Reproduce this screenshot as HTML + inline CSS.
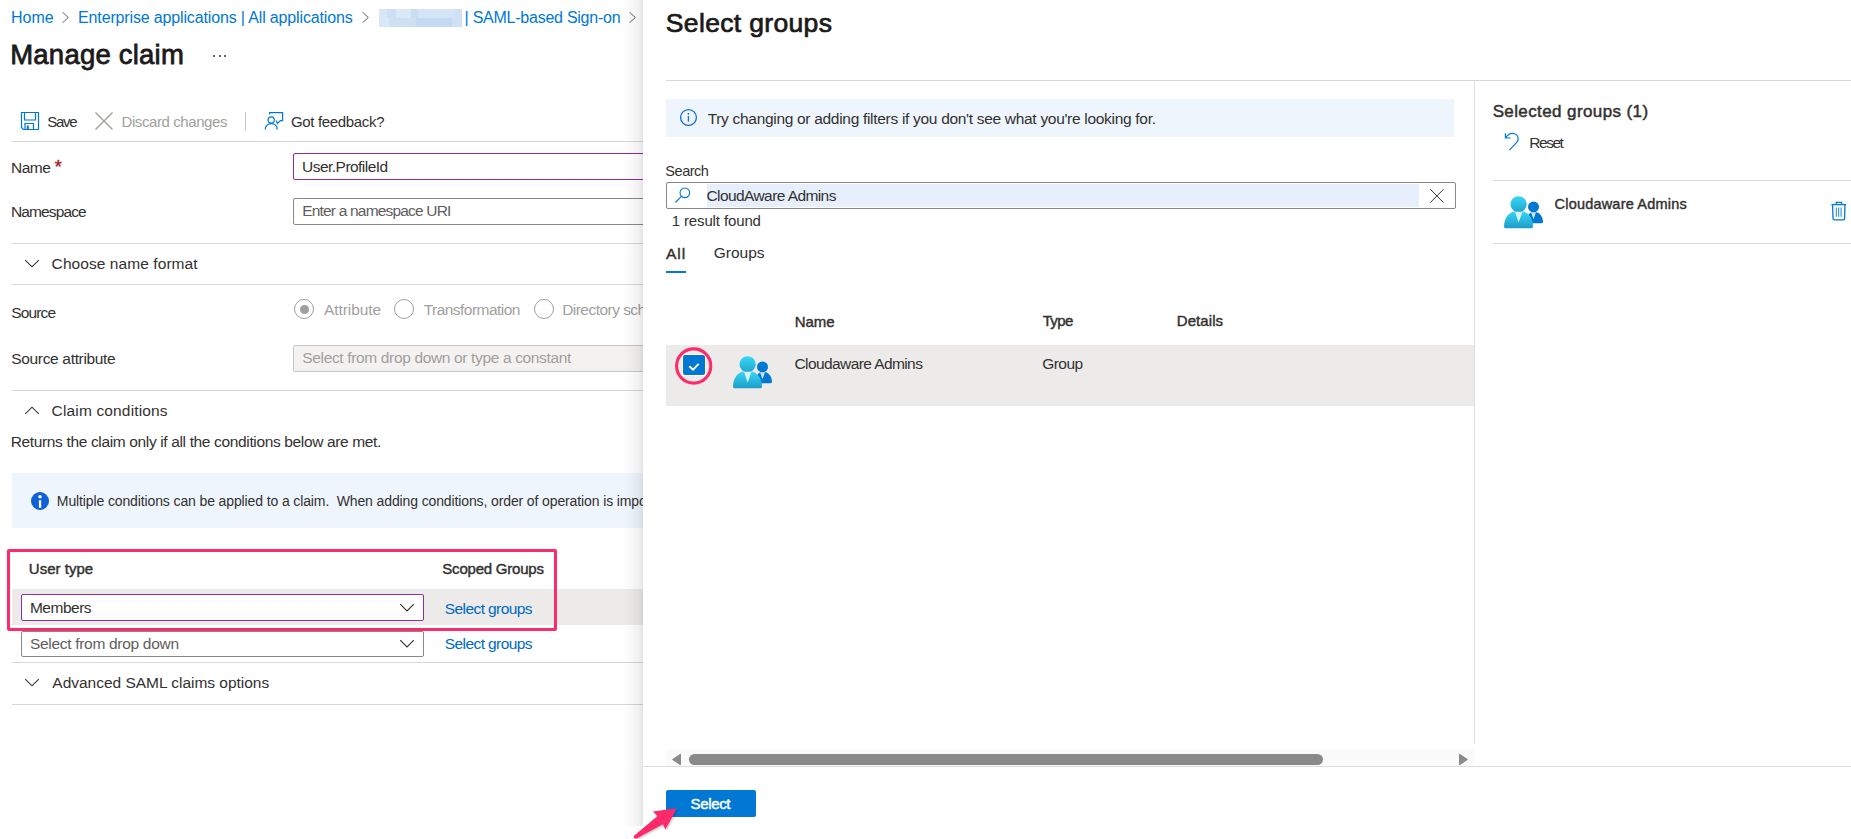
<!DOCTYPE html>
<html><head><meta charset="utf-8">
<style>
html,body{margin:0;padding:0;}
body{width:1851px;height:839px;position:relative;overflow:hidden;background:#fff;font-family:"Liberation Sans",sans-serif;}
.t{position:absolute;white-space:nowrap;line-height:1;z-index:5;}
.a{position:absolute;}
#left{position:absolute;left:0;top:0;width:643px;height:839px;overflow:hidden;background:#fff;}
.hl{position:absolute;height:1px;background:#d6d6d6;}
</style></head><body>
<div id="left">
<div class="t" style="left:10.99px;top:10.15px;font-size:16px;letter-spacing:0.015px;color:#0078d4;">Home</div>
<div class="t" style="left:78.09px;top:10.15px;font-size:16px;letter-spacing:-0.150px;color:#0078d4;">Enterprise applications | All applications</div>
<div class="t" style="left:464.57px;top:10.15px;font-size:16px;letter-spacing:-0.248px;color:#0078d4;">| SAML-based Sign-on</div>
<div class="t" style="left:10.24px;top:40.72px;font-size:27.5px;letter-spacing:0.216px;color:#1b1a19;-webkit-text-stroke:0.77px #1b1a19;">Manage claim</div>
<div class="t" style="left:47.32px;top:114.30px;font-size:15px;letter-spacing:-1.281px;color:#323130;">Save</div>
<div class="t" style="left:121.47px;top:114.30px;font-size:15px;letter-spacing:-0.411px;color:#a19f9d;">Discard changes</div>
<div class="t" style="left:290.95px;top:114.30px;font-size:15px;letter-spacing:-0.330px;color:#323130;">Got feedback?</div>
<div class="t" style="left:11.03px;top:160.38px;font-size:15.5px;letter-spacing:-0.529px;color:#323130;">Name</div>
<div class="t" style="left:54.71px;top:158.36px;font-size:18px;letter-spacing:0.000px;color:#a4262c;-webkit-text-stroke:0.50px #a4262c;">*</div>
<div class="t" style="left:302.10px;top:158.88px;font-size:15.5px;letter-spacing:-0.538px;color:#323130;">User.ProfileId</div>
<div class="t" style="left:11.03px;top:203.58px;font-size:15.5px;letter-spacing:-0.881px;color:#323130;">Namespace</div>
<div class="t" style="left:302.23px;top:202.88px;font-size:15.5px;letter-spacing:-0.811px;color:#605e5c;">Enter a namespace URI</div>
<div class="t" style="left:51.61px;top:256.28px;font-size:15.5px;letter-spacing:0.074px;color:#323130;">Choose name format</div>
<div class="t" style="left:11.30px;top:304.88px;font-size:15.5px;letter-spacing:-0.864px;color:#323130;">Source</div>
<div class="t" style="left:323.97px;top:301.88px;font-size:15.5px;letter-spacing:-0.063px;color:#a19f9d;">Attribute</div>
<div class="t" style="left:423.65px;top:301.88px;font-size:15.5px;letter-spacing:-0.529px;color:#a19f9d;">Transformation</div>
<div class="t" style="left:562.13px;top:301.88px;font-size:15.5px;letter-spacing:-0.529px;color:#a19f9d;">Directory schema extension</div>
<div class="t" style="left:11.30px;top:350.88px;font-size:15.5px;letter-spacing:-0.335px;color:#323130;">Source attribute</div>
<div class="t" style="left:302.30px;top:349.88px;font-size:15.5px;letter-spacing:-0.348px;color:#a19f9d;">Select from drop down or type a constant</div>
<div class="t" style="left:51.61px;top:402.88px;font-size:15.5px;letter-spacing:0.149px;color:#323130;">Claim conditions</div>
<div class="t" style="left:10.73px;top:434.28px;font-size:15.5px;letter-spacing:-0.353px;color:#323130;">Returns the claim only if all the conditions below are met.</div>
<div class="t" style="left:56.85px;top:494.15px;font-size:14px;letter-spacing:-0.120px;color:#323130;white-space:pre;">Multiple conditions can be applied to a claim.  When adding conditions, order of operation is important.</div>
<div class="t" style="left:28.84px;top:561.30px;font-size:15px;letter-spacing:0.017px;color:#323130;-webkit-text-stroke:0.42px #323130;">User type</div>
<div class="t" style="left:442.32px;top:561.30px;font-size:15px;letter-spacing:-0.217px;color:#323130;-webkit-text-stroke:0.42px #323130;">Scoped Groups</div>
<div class="t" style="left:29.93px;top:599.88px;font-size:15.5px;letter-spacing:-0.494px;color:#323130;">Members</div>
<div class="t" style="left:444.80px;top:600.58px;font-size:15.5px;letter-spacing:-0.585px;color:#0068c4;">Select groups</div>
<div class="t" style="left:29.90px;top:635.88px;font-size:15.5px;letter-spacing:-0.298px;color:#605e5c;">Select from drop down</div>
<div class="t" style="left:444.80px;top:636.38px;font-size:15.5px;letter-spacing:-0.585px;color:#0068c4;">Select groups</div>
<div class="t" style="left:52.37px;top:674.88px;font-size:15.5px;letter-spacing:-0.021px;color:#323130;">Advanced SAML claims options</div>
<!-- breadcrumb chevrons -->
<svg class="a" style="left:61px;top:11px" width="9" height="13" viewBox="0 0 9 13"><path d="M1.6 1.3 L7.3 6.5 L1.6 11.7" fill="none" stroke="#605e5c" stroke-width="1"/></svg>
<svg class="a" style="left:361px;top:11px" width="9" height="13" viewBox="0 0 9 13"><path d="M1.6 1.3 L7.3 6.5 L1.6 11.7" fill="none" stroke="#605e5c" stroke-width="1"/></svg>
<svg class="a" style="left:628px;top:11px" width="9" height="13" viewBox="0 0 9 13"><path d="M1.6 1.3 L7.3 6.5 L1.6 11.7" fill="none" stroke="#605e5c" stroke-width="1"/></svg>
<!-- blurred block -->
<div class="a" style="left:379px;top:9px;width:83px;height:18px;background:linear-gradient(90deg,#d6e6f5 0,#d6e6f5 10%,#cde0f3 10%,#cde0f3 20%,#dbe9f6 20%,#dbe9f6 38%,#c9def2 38%,#c9def2 47%,#d4e5f5 47%,#d4e5f5 90%,#d0e2f4 90%);"></div>
<div class="a" style="left:379px;top:18px;width:83px;height:9px;background:linear-gradient(90deg,#d9e8f6 0,#d9e8f6 12%,#cde1f3 12%,#cde1f3 45%,#c3daf0 45%,#c3daf0 88%,#cfe1f3 88%);"></div>
<!-- ellipsis -->
<div class="a" style="left:213px;top:55px;width:2px;height:2px;background:#323130;border-radius:1px"></div>
<div class="a" style="left:218.5px;top:55px;width:2px;height:2px;background:#323130;border-radius:1px"></div>
<div class="a" style="left:224px;top:55px;width:2px;height:2px;background:#323130;border-radius:1px"></div>
<!-- toolbar icons -->
<svg class="a" style="left:20px;top:111px" width="20" height="20" viewBox="0 0 20 20"><path d="M1.5 1.5 H18.5 V18.5 H3.5 L1.5 16.5 Z" fill="none" stroke="#0078d4" stroke-width="1.2"/><path d="M4.5 1.5 V9 H15.5 V1.5" fill="none" stroke="#0078d4" stroke-width="1.2"/><path d="M5 18.5 V12.5 H13.5 V18.5" fill="none" stroke="#0078d4" stroke-width="1.2"/><rect x="6.8" y="14.5" width="2" height="4" fill="#0078d4"/></svg>
<svg class="a" style="left:94px;top:111px" width="20" height="20" viewBox="0 0 20 20"><path d="M1.5 1.5 L18.5 18.5 M18.5 1.5 L1.5 18.5" fill="none" stroke="#a19f9d" stroke-width="1.4"/></svg>
<div class="a" style="left:245px;top:112px;width:1px;height:19px;background:#c8c6c4"></div>
<svg class="a" style="left:264px;top:111px" width="20" height="20" viewBox="0 0 20 20"><path d="M5.6 3.5 V1.6 H18.6 V9.6 H16.4 L13.5 12.4 L12.1 9.4" fill="none" stroke="#0078d4" stroke-width="1.2" stroke-linejoin="miter"/><circle cx="7.2" cy="9" r="3.1" fill="none" stroke="#0078d4" stroke-width="1.2"/><path d="M1.3 18.6 C1.3 14.8 3.8 12.6 7.2 12.6 C10.6 12.6 13.1 14.8 13.1 18.6" fill="none" stroke="#0078d4" stroke-width="1.2"/></svg>
<div class="hl" style="left:12px;top:141px;width:640px"></div>
<!-- inputs -->
<div class="a" style="left:293px;top:153px;width:400px;height:25px;border:1px solid #8a2da5;border-radius:2px;background:#fff;z-index:-0"></div>
<div class="a" style="left:293px;top:198px;width:400px;height:25px;border:1px solid #8a8886;border-radius:2px;"></div>
<div class="hl" style="left:12px;top:243px;width:640px"></div>
<svg class="a" style="left:24px;top:258px" width="16" height="12" viewBox="0 0 16 12"><path d="M1.2 2.2 L8 8.8 L14.8 2.2" fill="none" stroke="#323130" stroke-width="1.1"/></svg>
<div class="hl" style="left:12px;top:284px;width:640px"></div>
<!-- radios -->
<div class="a" style="left:294px;top:299px;width:18px;height:18px;border:1px solid #a19f9d;border-radius:50%"></div>
<div class="a" style="left:299.5px;top:304.5px;width:9px;height:9px;background:#a19f9d;border-radius:50%"></div>
<div class="a" style="left:394px;top:299px;width:18px;height:18px;border:1px solid #a19f9d;border-radius:50%"></div>
<div class="a" style="left:534px;top:299px;width:18px;height:18px;border:1px solid #a19f9d;border-radius:50%"></div>
<div class="a" style="left:293px;top:345px;width:400px;height:25px;border:1px solid #c8c6c4;border-radius:2px;background:#f3f2f1"></div>
<div class="hl" style="left:12px;top:390px;width:640px"></div>
<svg class="a" style="left:24px;top:404px" width="16" height="12" viewBox="0 0 16 12"><path d="M1.2 9.8 L8 3.2 L14.8 9.8" fill="none" stroke="#323130" stroke-width="1.1"/></svg>
<!-- info box -->
<div class="a" style="left:12px;top:473px;width:640px;height:55px;background:#eef5fd;border-radius:2px"></div>
<svg class="a" style="left:30px;top:491px" width="20" height="20" viewBox="0 0 20 20"><circle cx="10" cy="10" r="9" fill="#0f5fd6"/><circle cx="10" cy="5.8" r="1.7" fill="#fff"/><rect x="8.9" y="9.2" width="2.3" height="7.6" fill="#fff"/></svg>
<!-- table rows -->
<div class="a" style="left:12px;top:589px;width:640px;height:36px;background:#edebe9"></div>
<div class="a" style="left:21px;top:594px;width:401px;height:25px;border:1px solid #8a2da5;border-radius:2px;background:#fff"></div>
<div class="a" style="left:21px;top:631px;width:401px;height:24px;border:1px solid #8a8886;border-radius:2px;background:#fff"></div>
<svg class="a" style="left:399px;top:602px" width="16" height="12" viewBox="0 0 16 12"><path d="M1.2 2.2 L8 9 L14.8 2.2" fill="none" stroke="#323130" stroke-width="1.1"/></svg>
<svg class="a" style="left:399px;top:638px" width="16" height="12" viewBox="0 0 16 12"><path d="M1.2 2.2 L8 9 L14.8 2.2" fill="none" stroke="#323130" stroke-width="1.1"/></svg>
<div class="hl" style="left:12px;top:662px;width:640px"></div>
<svg class="a" style="left:24px;top:677px" width="16" height="12" viewBox="0 0 16 12"><path d="M1.2 2.2 L8 8.8 L14.8 2.2" fill="none" stroke="#323130" stroke-width="1.1"/></svg>
<div class="hl" style="left:12px;top:704px;width:640px"></div>
<!-- pink rect -->
<div class="a" style="left:7px;top:549px;width:544px;height:76px;border:3px solid #fc2b6b;border-radius:2px"></div>
</div>
<!-- shadow -->
<div class="a" style="z-index:10;left:623px;top:0;width:20px;height:826px;background:linear-gradient(90deg,rgba(0,0,0,0) 0,rgba(0,0,0,0.025) 40%,rgba(0,0,0,0.06) 80%,rgba(0,0,0,0.11) 100%)"></div>
<!-- blade -->
<div class="t" style="left:665.80px;top:9.56px;font-size:26.5px;letter-spacing:0.343px;color:#1b1a19;-webkit-text-stroke:0.74px #1b1a19;">Select groups</div>
<div class="t" style="left:707.65px;top:110.88px;font-size:15.5px;letter-spacing:-0.302px;color:#323130;">Try changing or adding filters if you don't see what you're looking for.</div>
<div class="t" style="left:665.34px;top:164.22px;font-size:14.5px;letter-spacing:-0.469px;color:#323130;">Search</div>
<div class="t" style="left:706.41px;top:187.88px;font-size:15.5px;letter-spacing:-0.580px;color:#323130;">CloudAware Admins</div>
<div class="t" style="left:671.66px;top:212.80px;font-size:15px;letter-spacing:-0.122px;color:#323130;">1 result found</div>
<div class="t" style="left:665.97px;top:245.68px;font-size:15.5px;letter-spacing:1.021px;color:#323130;-webkit-text-stroke:0.43px #323130;">All</div>
<div class="t" style="left:713.82px;top:244.88px;font-size:15.5px;letter-spacing:-0.018px;color:#323130;">Groups</div>
<div class="t" style="left:794.77px;top:313.50px;font-size:15px;letter-spacing:-0.038px;color:#323130;-webkit-text-stroke:0.42px #323130;">Name</div>
<div class="t" style="left:1042.66px;top:313.30px;font-size:15px;letter-spacing:-0.648px;color:#323130;-webkit-text-stroke:0.42px #323130;">Type</div>
<div class="t" style="left:1176.77px;top:313.30px;font-size:15px;letter-spacing:0.070px;color:#323130;-webkit-text-stroke:0.42px #323130;">Details</div>
<div class="t" style="left:794.51px;top:355.88px;font-size:15.5px;letter-spacing:-0.591px;color:#323130;">Cloudaware Admins</div>
<div class="t" style="left:1042.22px;top:355.88px;font-size:15.5px;letter-spacing:-0.537px;color:#323130;">Group</div>
<div class="t" style="left:1492.63px;top:102.81px;font-size:17px;letter-spacing:0.393px;color:#323130;-webkit-text-stroke:0.48px #323130;">Selected groups (1)</div>
<div class="t" style="left:1529.23px;top:134.68px;font-size:15.5px;letter-spacing:-1.451px;color:#323130;">Reset</div>
<div class="t" style="left:1554.56px;top:197.42px;font-size:14.5px;letter-spacing:0.200px;color:#323130;-webkit-text-stroke:0.41px #323130;">Cloudaware Admins</div>
<div class="hl" style="left:666px;top:80px;width:1185px"></div>
<div class="a" style="left:1474px;top:80px;width:1px;height:664px;background:#e1dfdd"></div>
<div class="a" style="left:666px;top:99px;width:788px;height:38px;background:#eef5fd"></div>
<svg class="a" style="left:679px;top:108px" width="20" height="20" viewBox="0 0 20 20"><circle cx="9.5" cy="9.5" r="7.9" fill="none" stroke="#0f6cd8" stroke-width="1.3"/><circle cx="9.4" cy="5.8" r="0.9" fill="#0f6cd8"/><path d="M9.4 8.6 V13" stroke="#0f6cd8" stroke-width="1.3" stroke-linecap="round"/></svg>
<div class="a" style="left:666px;top:182px;width:788px;height:25px;border:1px solid #8a8886;border-radius:2px"></div>
<div class="a" style="left:707px;top:184px;width:712px;height:23px;background:#e6effb"></div>
<svg class="a" style="left:672px;top:184px" width="22" height="22" viewBox="0 0 22 22"><circle cx="12.85" cy="8.85" r="4.8" fill="none" stroke="#0078d4" stroke-width="1.1"/><path d="M9.4 12.3 L3.4 18.5" stroke="#0078d4" stroke-width="1.1"/></svg>
<svg class="a" style="left:1428px;top:187px" width="18" height="18" viewBox="0 0 18 18"><path d="M2.2 2.2 L15.6 15.7 M15.6 2.2 L2.2 15.7" stroke="#3b3a39" stroke-width="1"/></svg>
<div class="a" style="left:666px;top:271px;width:20px;height:2px;background:#0078d4"></div>
<div class="a" style="left:666px;top:345px;width:808px;height:61px;background:#edebe9"></div>
<div class="a" style="left:682px;top:354px;width:24px;height:22px;background:#fffdf8;border-radius:2px"></div>
<div class="a" style="left:683px;top:355px;width:22px;height:20px;background:#0078d4;border-radius:2px"></div>
<svg class="a" style="left:683px;top:355px" width="22" height="20" viewBox="0 0 22 20"><path d="M6.3 11.3 L10 14.7 L15.7 8.9" fill="none" stroke="#fff" stroke-width="2"/></svg>
<svg class="a" style="left:672px;top:344px" width="44" height="44" viewBox="0 0 44 44"><circle cx="21.7" cy="22" r="17.1" fill="none" stroke="#fc2b6b" stroke-width="3.1"/></svg>
<div class="a" style="left:733px;top:355.5px"><svg width="40" height="33" viewBox="0 0 40 33">
<defs>
<linearGradient id="gha" x1="0" y1="0" x2="0" y2="1"><stop offset="0" stop-color="#36d8f8"/><stop offset="1" stop-color="#21a4cd"/></linearGradient>
<linearGradient id="gba" x1="0" y1="0" x2="0" y2="1"><stop offset="0" stop-color="#36d6f6"/><stop offset="1" stop-color="#1d9dc7"/></linearGradient>
</defs>
<path d="M23 27.2 L23 21 C24.5 18 26.5 16 29 16 L31 16 C35.5 16 39 21 39 25.8 Q39 27.2 37.6 27.2 Z" fill="#0078d4"/>
<circle cx="29.5" cy="10.9" r="5.5" fill="#0078d4"/>
<path d="M27 16.3 L32 16.3 L29.5 23.3 Z" fill="#cfe8f8"/>
<path d="M1.3 32.3 Q0 32.3 0 30.5 C0 22 5.5 15.5 11 15.5 L18 15.5 C23.5 15.5 29 22 29 30.5 Q29 32.3 27.7 32.3 Z" fill="url(#gba)"/>
<circle cx="14.6" cy="8.3" r="8.1" fill="url(#gha)"/>
<path d="M11 15.8 L18.5 15.8 L14.6 26.5 Z" fill="#d6f4fc"/>
</svg></div>
<div class="a" style="left:666px;top:750px;width:808px;height:16px;background:#fafafa"></div>
<svg class="a" style="left:670px;top:752px" width="14" height="14" viewBox="0 0 14 14"><path d="M10.5 2.2 L10.5 12.8 L2.5 7.5 Z" fill="#8a8a8a" stroke="#8a8a8a" stroke-width="1" stroke-linejoin="round"/></svg>
<div class="a" style="left:689px;top:754px;width:634px;height:11px;background:#8a8a8a;border-radius:5.5px"></div>
<svg class="a" style="left:1457px;top:752px" width="14" height="14" viewBox="0 0 14 14"><path d="M2.5 2.2 L2.5 12.8 L10.5 7.5 Z" fill="#8a8a8a" stroke="#8a8a8a" stroke-width="1" stroke-linejoin="round"/></svg>
<div class="hl" style="left:643px;top:766px;width:1208px;background:#dcdcdc"></div>
<div class="a" style="left:666px;top:790px;width:90px;height:27px;background:#0078d4;border-radius:2px"></div>
<div class="t" style="left:690.62px;top:796.30px;font-size:15px;letter-spacing:-0.360px;color:#ffffff;-webkit-text-stroke:0.42px #ffffff;">Select</div>
<!-- right panel -->
<svg class="a" style="left:1502px;top:130px" width="20" height="24" viewBox="0 0 20 24"><path d="M3.4 3.3 V8 H8.6" fill="none" stroke="#0078d4" stroke-width="1.2"/><path d="M3.9 7.6 C5.5 4.8 7.6 3.3 10.3 3.3 C13.8 3.3 16.2 5.8 16.2 8.8 C16.2 10.3 15.6 11.6 14.5 12.7 L7.4 20.2" fill="none" stroke="#0078d4" stroke-width="1.2"/></svg>
<div class="hl" style="left:1493px;top:180px;width:358px;background:#dcdcdc"></div>
<div class="a" style="left:1504px;top:196px"><svg width="40" height="33" viewBox="0 0 40 33">
<defs>
<linearGradient id="ghb" x1="0" y1="0" x2="0" y2="1"><stop offset="0" stop-color="#36d8f8"/><stop offset="1" stop-color="#21a4cd"/></linearGradient>
<linearGradient id="gbb" x1="0" y1="0" x2="0" y2="1"><stop offset="0" stop-color="#36d6f6"/><stop offset="1" stop-color="#1d9dc7"/></linearGradient>
</defs>
<path d="M23 27.2 L23 21 C24.5 18 26.5 16 29 16 L31 16 C35.5 16 39 21 39 25.8 Q39 27.2 37.6 27.2 Z" fill="#0078d4"/>
<circle cx="29.5" cy="10.9" r="5.5" fill="#0078d4"/>
<path d="M27 16.3 L32 16.3 L29.5 23.3 Z" fill="#cfe8f8"/>
<path d="M1.3 32.3 Q0 32.3 0 30.5 C0 22 5.5 15.5 11 15.5 L18 15.5 C23.5 15.5 29 22 29 30.5 Q29 32.3 27.7 32.3 Z" fill="url(#gbb)"/>
<circle cx="14.6" cy="8.3" r="8.1" fill="url(#ghb)"/>
<path d="M11 15.8 L18.5 15.8 L14.6 26.5 Z" fill="#d6f4fc"/>
</svg></div>
<svg class="a" style="left:1830px;top:200px" width="18" height="22" viewBox="0 0 18 22"><path d="M1.4 4.6 H16 M6.3 4.3 V2.4 H11.6 V4.3" fill="none" stroke="#0078d4" stroke-width="1.3"/><path d="M2.6 4.6 L3 18.4 C3 19.3 3.5 19.8 4.3 19.8 H13.3 C14.1 19.8 14.6 19.3 14.6 18.4 L15 4.6" fill="none" stroke="#0078d4" stroke-width="1.3"/><path d="M6.3 7.6 V16.8 M8.7 7.6 V16.8 M11.1 7.6 V16.8" stroke="#0078d4" stroke-width="0.9"/></svg>
<div class="hl" style="left:1493px;top:243px;width:358px;background:#dcdcdc"></div>
<!-- pink arrow -->
<svg class="a" style="left:625px;top:795px;z-index:20" width="70" height="44" viewBox="0 0 70 44"><defs><filter id="ash" x="-20%" y="-20%" width="140%" height="140%"><feDropShadow dx="0.8" dy="1" stdDeviation="0.9" flood-color="#000" flood-opacity="0.28"/></filter></defs><path d="M9.4 40.6 L32.3 21.2 C31 19.5 29.5 18 28 16.6 C36 15.2 44 14 51.6 13.4 C48 20.5 44.2 27.6 40.4 34.6 C39.6 32.8 38.8 31 37.9 29.2 L12 43.2 C9.5 44.5 7.6 42.3 9.4 40.6 Z" fill="#fc2b6b" filter="url(#ash)"/></svg>
</body></html>
